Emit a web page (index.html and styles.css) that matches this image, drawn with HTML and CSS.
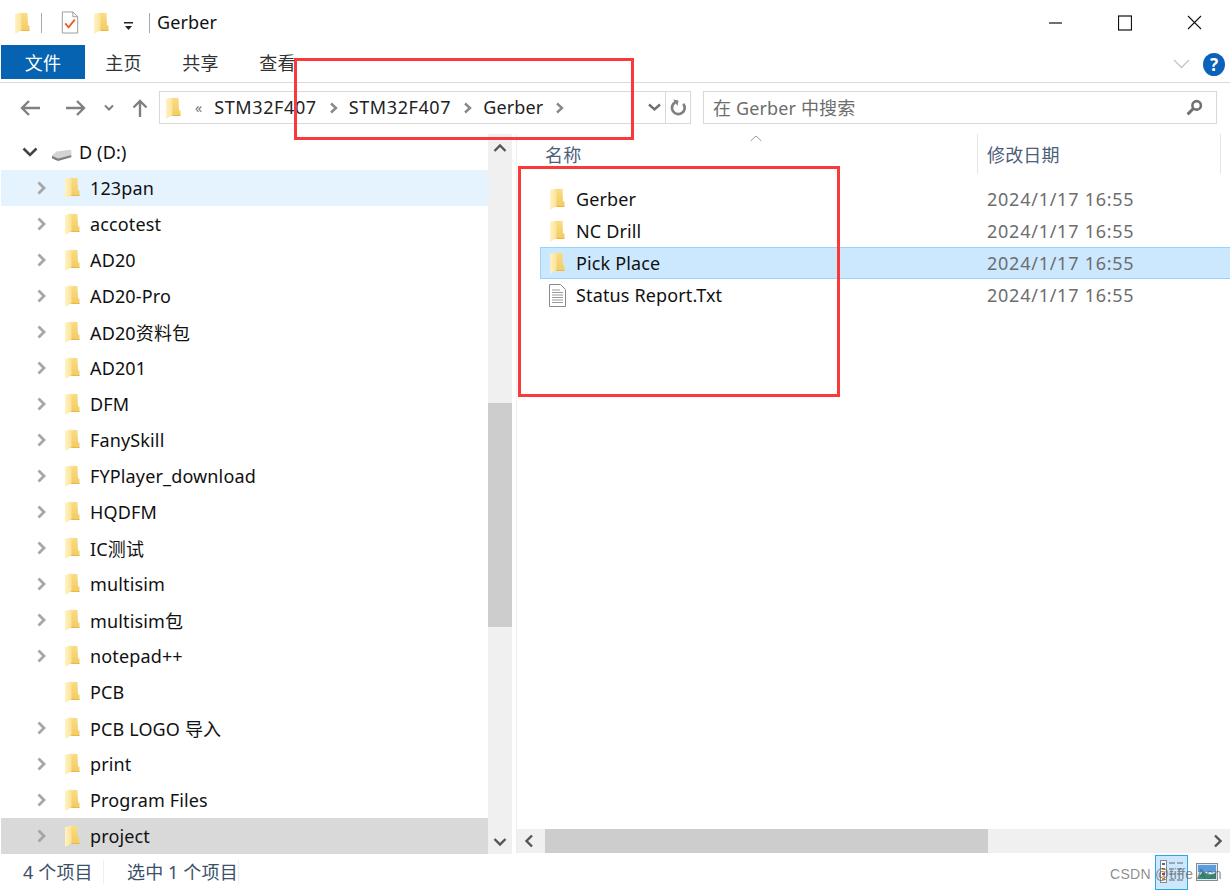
FILE: index.html
```html
<!DOCTYPE html>
<html lang="zh-CN">
<head>
    <meta charset="UTF-8">
    <title>Gerber</title>
    <link rel="stylesheet" href="styles.css">
</head>
<body>
    <svg class="defs" width="0" height="0">
        <linearGradient id="folder-back" x1="0" y1="0" x2="0" y2="1">
            <stop offset="0" stop-color="#f9dc85"/>
            <stop offset="1" stop-color="#f3cb62"/>
        </linearGradient>
        <linearGradient id="folder-front" x1="0" y1="0" x2="1" y2="0">
            <stop offset="0" stop-color="#fff3c4"/>
            <stop offset="1" stop-color="#fbe398"/>
        </linearGradient>
        <symbol id="folder" viewBox="0 0 15 22">
            <path d="M5 1h7.500l.5 12 1.500 1v5H5z" fill="url(#folder-back)"/>
            <path d="M0 2l6.500-1.500V18L1 21.500H0z" fill="url(#folder-front)"/>
            <path d="M6.500 18.200h8V19h-8z" fill="#e2b44c"/>
        </symbol>
        <symbol id="chev" viewBox="0 0 12 14">
            <path d="M2.500 1.500L8 7l-5.500 5.500" fill="none" stroke="#a6a6a6" stroke-width="2.800"/>
        </symbol>
        <symbol id="crumb-chev" viewBox="0 0 9 12">
            <path d="M2 1.500L7 6l-5 4.500" fill="none" stroke="#888" stroke-width="2.400"/>
        </symbol>
    </svg>

    <div class="window">
        <div class="titlebar">
            <div class="qat">
                <svg class="qat-folder" width="15" height="22"><use href="#folder"/></svg>
                <span class="qat-sep"></span>
                <svg class="qat-check" width="18" height="23" viewBox="0 0 18 24">
                    <path d="M1 1h11l5 5v17H1z" fill="#fff" stroke="#999"/>
                    <path d="M12 1v5h5" fill="none" stroke="#999"/>
                    <path d="M4 13l3.500 4L14 9" fill="none" stroke="#e8602c" stroke-width="2"/>
                </svg>
                <svg class="qat-folder2" width="15" height="22"><use href="#folder"/></svg>
                <svg class="qat-drop" width="10" height="10" viewBox="0 0 10 10">
                    <path d="M0 1h9v1.500H0zM1 5h7L4.500 9z" fill="#222"/>
                </svg>
                <span class="qat-sep qat-sep-2"></span>
                <span class="win-title">Gerber</span>
            </div>
            <div class="win-controls">
                <svg width="14" height="14" viewBox="0 0 14 14"><path d="M0 7h13" stroke="#111" stroke-width="1.200"/></svg>
                <svg width="14" height="16" viewBox="0 0 14 16"><rect x=".5" y="1" width="13" height="14" fill="none" stroke="#111" stroke-width="1.200"/></svg>
                <svg width="15" height="15" viewBox="0 0 15 15"><path d="M1 1l13 13M14 1L1 14" stroke="#111" stroke-width="1.100"/></svg>
            </div>
        </div>

        <div class="ribbon">
            <div class="tab tab-file">文件</div>
            <div class="tab">主页</div>
            <div class="tab">共享</div>
            <div class="tab">查看</div>
            <div class="ribbon-right">
                <svg width="17" height="10" viewBox="0 0 17 10"><path d="M1 1l7.500 7.500L16 1" fill="none" stroke="#c4c4c4" stroke-width="1.300"/></svg>
                <div class="help">?</div>
            </div>
        </div>

        <div class="navbar">
            <div class="nav-btns">
                <svg class="nav-back" width="22" height="18" viewBox="0 0 22 18"><path d="M21 9H3M10 2L3 9l7 7" fill="none" stroke="#808080" stroke-width="2.400"/></svg>
                <svg width="22" height="18" viewBox="0 0 22 18"><path d="M2 9h18M13 2l7 7-7 7" fill="none" stroke="#808080" stroke-width="2.400"/></svg>
                <svg width="10" height="8" viewBox="0 0 10 8"><path d="M1 1.500l4 4 4-4" fill="none" stroke="#808080" stroke-width="2"/></svg>
                <svg width="16" height="20" viewBox="0 0 16 20"><path d="M8 19V3M1.500 9.500L8 3l6.500 6.500" fill="none" stroke="#808080" stroke-width="2.400"/></svg>
            </div>
            <div class="address">
                <svg class="addr-folder" width="15" height="22"><use href="#folder"/></svg>
                <span class="addr-more">«</span>
                <span class="crumb crumb-code">STM32F407</span><svg class="crumb-arrow" width="9" height="12"><use href="#crumb-chev"/></svg>
                <span class="crumb crumb-code">STM32F407</span><svg class="crumb-arrow" width="9" height="12"><use href="#crumb-chev"/></svg>
                <span class="crumb">Gerber</span><svg class="crumb-arrow" width="9" height="12"><use href="#crumb-chev"/></svg>
                <div class="addr-end">
                    <div class="addr-drop"><svg width="13" height="9" viewBox="0 0 13 9"><path d="M1 1.500l5.500 5 5.500-5" fill="none" stroke="#707070" stroke-width="2.400"/></svg></div>
                    <div class="addr-refresh"><svg width="17" height="18" viewBox="0 0 16 17"><path d="M12.500 4.500A6 6 0 1 1 5 3" fill="none" stroke="#808080" stroke-width="2.600"/><path d="M3 0l5 1-1 5z" fill="#808080" transform="translate(0 .5)"/></svg></div>
                </div>
            </div>
            <div class="search">
                <span class="search-text">在 Gerber 中搜索</span>
                <svg width="17" height="17" viewBox="0 0 16 16"><circle cx="10" cy="6" r="4" fill="none" stroke="#707070" stroke-width="2.400"/><path d="M7 9l-5.500 5.500" stroke="#707070" stroke-width="2.800"/></svg>
            </div>
        </div>

        <div class="panes">
            <div class="tree">
                <div class="tree-list">
                    <div class="tree-row">
                        <svg class="tree-open" width="16" height="10" viewBox="0 0 16 10"><path d="M1.500 1.500L8 8l6.500-6.500" fill="none" stroke="#444" stroke-width="2.600"/></svg>
                        <svg class="drive" width="23" height="12" viewBox="0 0 24 14"><path d="M1 8l5-5 16-2q1.500 0 1.500 2v4L8 11z" fill="#d4d4d4"/><path d="M1 8l7 3 15.500-4v2.500L8 14l-7-3z" fill="#7f7f7f"/><path d="M4 11l3 1" stroke="#3f9f4f"/></svg>
                        <span>D (D:)</span>
                    </div>
                    <div class="tree-row hot"><svg class="arrow" width="12" height="14"><use href="#chev"/></svg><svg class="folder" width="15" height="22"><use href="#folder"/></svg><span>123pan</span></div>
                    <div class="tree-row"><svg class="arrow" width="12" height="14"><use href="#chev"/></svg><svg class="folder" width="15" height="22"><use href="#folder"/></svg><span>accotest</span></div>
                    <div class="tree-row"><svg class="arrow" width="12" height="14"><use href="#chev"/></svg><svg class="folder" width="15" height="22"><use href="#folder"/></svg><span>AD20</span></div>
                    <div class="tree-row"><svg class="arrow" width="12" height="14"><use href="#chev"/></svg><svg class="folder" width="15" height="22"><use href="#folder"/></svg><span>AD20-Pro</span></div>
                    <div class="tree-row"><svg class="arrow" width="12" height="14"><use href="#chev"/></svg><svg class="folder" width="15" height="22"><use href="#folder"/></svg><span>AD20资料包</span></div>
                    <div class="tree-row"><svg class="arrow" width="12" height="14"><use href="#chev"/></svg><svg class="folder" width="15" height="22"><use href="#folder"/></svg><span>AD201</span></div>
                    <div class="tree-row"><svg class="arrow" width="12" height="14"><use href="#chev"/></svg><svg class="folder" width="15" height="22"><use href="#folder"/></svg><span>DFM</span></div>
                    <div class="tree-row"><svg class="arrow" width="12" height="14"><use href="#chev"/></svg><svg class="folder" width="15" height="22"><use href="#folder"/></svg><span>FanySkill</span></div>
                    <div class="tree-row"><svg class="arrow" width="12" height="14"><use href="#chev"/></svg><svg class="folder" width="15" height="22"><use href="#folder"/></svg><span>FYPlayer_download</span></div>
                    <div class="tree-row"><svg class="arrow" width="12" height="14"><use href="#chev"/></svg><svg class="folder" width="15" height="22"><use href="#folder"/></svg><span>HQDFM</span></div>
                    <div class="tree-row"><svg class="arrow" width="12" height="14"><use href="#chev"/></svg><svg class="folder" width="15" height="22"><use href="#folder"/></svg><span>IC测试</span></div>
                    <div class="tree-row"><svg class="arrow" width="12" height="14"><use href="#chev"/></svg><svg class="folder" width="15" height="22"><use href="#folder"/></svg><span>multisim</span></div>
                    <div class="tree-row"><svg class="arrow" width="12" height="14"><use href="#chev"/></svg><svg class="folder" width="15" height="22"><use href="#folder"/></svg><span>multisim包</span></div>
                    <div class="tree-row"><svg class="arrow" width="12" height="14"><use href="#chev"/></svg><svg class="folder" width="15" height="22"><use href="#folder"/></svg><span>notepad++</span></div>
                    <div class="tree-row"><span class="arrow-none"></span><svg class="folder" width="15" height="22"><use href="#folder"/></svg><span>PCB</span></div>
                    <div class="tree-row"><svg class="arrow" width="12" height="14"><use href="#chev"/></svg><svg class="folder" width="15" height="22"><use href="#folder"/></svg><span>PCB LOGO 导入</span></div>
                    <div class="tree-row"><svg class="arrow" width="12" height="14"><use href="#chev"/></svg><svg class="folder" width="15" height="22"><use href="#folder"/></svg><span>print</span></div>
                    <div class="tree-row"><svg class="arrow" width="12" height="14"><use href="#chev"/></svg><svg class="folder" width="15" height="22"><use href="#folder"/></svg><span>Program Files</span></div>
                    <div class="tree-row active"><svg class="arrow" width="12" height="14"><use href="#chev"/></svg><svg class="folder" width="15" height="22"><use href="#folder"/></svg><span>project</span></div>
                </div>
                <div class="vscroll">
                    <svg width="14" height="10" viewBox="0 0 14 10"><path d="M1.500 8L7 2.500 12.500 8" fill="none" stroke="#555" stroke-width="2.400"/></svg>
                    <div class="vtrack"><div class="vthumb"></div></div>
                    <svg width="14" height="10" viewBox="0 0 14 10"><path d="M1.500 2L7 7.500 12.500 2" fill="none" stroke="#555" stroke-width="2.400"/></svg>
                </div>
            </div>

            <div class="files">
                <div class="file-head">
                    <svg class="sort-up" width="12" height="7" viewBox="0 0 12 7"><path d="M.5 6L6 1l5.500 5" fill="none" stroke="#999"/></svg>
                    <div class="col-name">名称</div>
                    <div class="col-date">修改日期</div>
                </div>
                <div class="file-list">
                    <div class="file-row"><div class="file-name"><svg width="15" height="22"><use href="#folder"/></svg><span>Gerber</span></div><div class="file-date">2024/1/17 16:55</div></div>
                    <div class="file-row"><div class="file-name"><svg width="15" height="22"><use href="#folder"/></svg><span>NC Drill</span></div><div class="file-date">2024/1/17 16:55</div></div>
                    <div class="file-row selected"><div class="file-name"><svg width="15" height="22"><use href="#folder"/></svg><span>Pick Place</span></div><div class="file-date">2024/1/17 16:55</div></div>
                    <div class="file-row"><div class="file-name"><svg class="doc-icon" width="17" height="23" viewBox="0 0 17 23"><path d="M.5.500h11l5 5v17H.5z" fill="#fff" stroke="#8a8a8a"/><path d="M3 6h8M3 8.500h11M3 11h11M3 13.500h11M3 16h11M3 18.500h11" stroke="#9a9a9a"/></svg><span>Status Report.Txt</span></div><div class="file-date">2024/1/17 16:55</div></div>
                </div>
                <div class="hscroll">
                    <svg width="10" height="14" viewBox="0 0 10 14"><path d="M8 1.500L2.500 7 8 12.500" fill="none" stroke="#555" stroke-width="2.400"/></svg>
                    <div class="htrack"><div class="hthumb"></div></div>
                    <svg width="10" height="14" viewBox="0 0 10 14"><path d="M2 1.500L7.500 7 2 12.500" fill="none" stroke="#555" stroke-width="2.400"/></svg>
                </div>
            </div>
        </div>

        <div class="statusbar">
            <span class="stat stat-count">4 个项目</span>
            <span class="stat stat-sel">选中 1 个项目</span>
            <div class="views">
                <div class="view-btn on">
                    <svg width="24" height="26" viewBox="0 0 24 26">
                        <rect x=".5" y="1.500" width="6" height="22" fill="#fff" stroke="#888"/>
                        <path d="M2 4h3v2H2z" fill="#3a6ea5"/><path d="M2 9h3v2H2z" fill="#c98a2b"/><path d="M2 14h3v2H2z" fill="#c0392b"/><path d="M2 19h3v2H2z" fill="#c98a2b"/>
                        <path d="M9 4h6M17 4h6M9 10h5M17 10h5M9 15h6M17 15h6M9 21h6M17 21h6" stroke="#666"/>
                    </svg>
                </div>
                <div class="view-btn">
                    <svg width="22" height="18" viewBox="0 0 22 18">
                        <rect x=".5" y=".5" width="21" height="17" fill="#dcebf8" stroke="#8a8a8a"/>
                        <path d="M2 2h18v7H2z" fill="#5b9be0"/>
                        <path d="M2 15l5-7 6 4 7-2v6H2z" fill="#2f8f7a"/>
                    </svg>
                </div>
            </div>
        </div>

        <div class="mark mark-addr"></div>
        <div class="mark mark-files"></div>
        <div class="watermark">CSDN @tiffe Asn</div>
    </div>
</body>
</html>
```

FILE: styles.css
```css
* {
    box-sizing: border-box;
}
body {
    margin: 0;
    padding: 0;
    background-color: white;
    font-family: "Noto Sans", "Noto Sans CJK SC", sans-serif;
    font-size: 18px;
    letter-spacing: 0.14px;
    color: #111;
    overflow: hidden;
}
.defs {
    position: absolute;
}
.window {
    position: relative;
    width: 1230px;
    height: 890px;
    display: flex;
    flex-direction: column;
    overflow: hidden;
}

/* title bar */
.titlebar {
    height: 45px;
    display: flex;
    justify-content: space-between;
    align-items: center;
    flex-shrink: 0;
}
.qat {
    display: flex;
    align-items: center;
    padding-left: 15px;
}
.qat-sep {
    width: 1px;
    height: 20px;
    background-color: #aaa;
    margin-left: 11px;
}
.qat-check {
    margin-left: 19px;
}
.qat-folder2 {
    margin-left: 15px;
}
.qat-drop {
    margin-left: 15px;
    margin-top: 6px;
}
.qat-sep-2 {
    margin-left: 15px;
}
.win-title {
    margin-left: 7px;
    line-height: 22px;
    margin-bottom: 2px;
}
.win-controls {
    display: flex;
    align-items: center;
    gap: 55px;
    padding-right: 28px;
}

/* ribbon tabs */
.ribbon {
    height: 38px;
    display: flex;
    align-items: flex-start;
    padding-left: 1px;
    border-bottom: 1px solid #dadada;
    flex-shrink: 0;
}
.tab {
    width: 77px;
    height: 34px;
    line-height: 36px;
    text-align: center;
    color: #333;
}
.tab-file {
    width: 84px;
    background-color: #0563b1;
    color: white;
}
.ribbon-right {
    margin-left: auto;
    display: flex;
    align-items: center;
    gap: 13px;
    padding-right: 5px;
    height: 38px;
}
.help {
    width: 22px;
    height: 23px;
    border-radius: 50%;
    background-color: #0c62ba;
    color: white;
    font-weight: bold;
    font-size: 17px;
    line-height: 23px;
    text-align: center;
}

/* address bar */
.navbar {
    height: 51px;
    display: flex;
    align-items: flex-start;
    padding-top: 8px;
    flex-shrink: 0;
}
.nav-btns {
    width: 159px;
    height: 34px;
    display: flex;
    align-items: center;
    padding-left: 19px;
    gap: 18px;
}
.nav-back {
    margin-right: 5px;
}
.address {
    width: 532px;
    height: 33px;
    border: 1px solid #d9d9d9;
    display: flex;
    align-items: center;
    padding-left: 6px;
}
.addr-more {
    color: #777;
    font-size: 14px;
    margin-left: 14px;
    margin-right: 12px;
}
.crumb {
    color: #222;
    margin-bottom: 2px;
}
.crumb-code {
    letter-spacing: 0.6px;
}
.crumb-arrow {
    margin: 0 11px 0 12px;
}
.addr-end {
    margin-left: auto;
    display: flex;
    align-items: center;
    height: 100%;
}
.addr-drop {
    width: 22px;
    display: flex;
    justify-content: center;
}
.addr-refresh {
    width: 25px;
    height: 100%;
    border-left: 1px solid #d9d9d9;
    display: flex;
    align-items: center;
    justify-content: center;
}
.search {
    width: 514px;
    height: 33px;
    margin-left: 12px;
    border: 1px solid #d9d9d9;
    display: flex;
    align-items: center;
    justify-content: space-between;
    padding: 0 13px 0 9px;
}
.search-text {
    color: #6d6d6d;
    margin-bottom: 2px;
}

/* panes */
.panes {
    flex-grow: 1;
    display: flex;
    min-height: 0;
}
.tree {
    width: 517px;
    display: flex;
    border-right: 1px solid #eee;
    padding-right: 4px;
    flex-shrink: 0;
}
.tree-list {
    width: 487px;
    margin-left: 1px;
    flex-shrink: 0;
}
.tree-row {
    height: 36px;
    display: flex;
    align-items: center;
    white-space: nowrap;
}
.tree-open {
    margin-left: 21px;
}
.drive {
    margin-left: 12px;
    margin-right: 6px;
    margin-top: 5px;
}
.arrow {
    margin-left: 35px;
}
.arrow-none {
    width: 12px;
    margin-left: 35px;
}
.folder {
    margin-left: 17px;
    margin-right: 10px;
}
.hot {
    background-color: #e5f3ff;
}
.active {
    background-color: #d9d9d9;
}
.vscroll {
    width: 24px;
    background-color: #f0f0f0;
    display: flex;
    flex-direction: column;
    align-items: center;
    justify-content: space-between;
    padding: 9px 0 7px;
}
.vtrack {
    flex-grow: 1;
    width: 100%;
    padding-top: 250px;
}
.vthumb {
    width: 100%;
    height: 224px;
    background-color: #cdcdcd;
}

/* file list */
.files {
    flex-grow: 1;
    min-width: 0;
    display: flex;
    flex-direction: column;
}
.file-head {
    position: relative;
    height: 41px;
    display: flex;
    align-items: flex-start;
    padding-left: 28px;
    color: #4c607a;
    flex-shrink: 0;
}
.sort-up {
    position: absolute;
    left: 233px;
    top: 1px;
}
.col-name {
    width: 432px;
    padding-top: 7px;
}
.col-date {
    width: 244px;
    height: 40px;
    border-left: 1px solid #e5e5e5;
    border-right: 1px solid #e5e5e5;
    padding: 7px 0 0 9px;
}
.file-list {
    flex-grow: 1;
    padding: 8px 0 0 23px;
}
.file-row {
    height: 32px;
    display: flex;
    align-items: center;
    white-space: nowrap;
    border: 1px solid transparent;
}
.file-row.selected {
    background-color: #cce8ff;
    border-color: #99d1ff;
    border-right: none;
}
.file-name {
    width: 446px;
    display: flex;
    align-items: center;
    gap: 11px;
    padding-left: 9px;
}
.doc-icon {
    margin: 0 -1px;
}
.file-date {
    color: #6d6d6d;
    letter-spacing: 0.75px;
}
.hscroll {
    height: 24px;
    margin-bottom: 1px;
    background-color: #f0f0f0;
    display: flex;
    align-items: center;
    justify-content: space-between;
    padding: 0 7px;
    flex-shrink: 0;
}
.htrack {
    flex-grow: 1;
    height: 100%;
    padding-left: 11px;
}
.hthumb {
    width: 443px;
    height: 100%;
    background-color: #cdcdcd;
}

/* status bar */
.statusbar {
    height: 36px;
    display: flex;
    align-items: center;
    padding-left: 23px;
    color: #3b4f68;
    flex-shrink: 0;
}
.stat {
    height: 24px;
    line-height: 24px;
    border-right: 1px solid #eee;
}
.stat-count {
    width: 81px;
    margin-right: 23px;
}
.stat-sel {
    width: 112px;
}
.views {
    margin-left: auto;
    display: flex;
    align-items: center;
    height: 100%;
    padding-right: 5px;
}
.view-btn {
    width: 37px;
    height: 35px;
    display: flex;
    align-items: center;
    justify-content: center;
}
.view-btn.on {
    width: 33px;
    background-color: #cce8ff;
    border: 1px solid #2ea7e0;
}

/* annotations drawn over the screenshot */
.mark {
    position: absolute;
    border: 3px solid #f93a3a;
}
.mark-addr {
    left: 294px;
    top: 58px;
    width: 340px;
    height: 82px;
}
.mark-files {
    left: 518px;
    top: 166px;
    width: 322px;
    height: 231px;
}
.watermark {
    position: absolute;
    left: 1110px;
    top: 866px;
    font-family: "Liberation Sans", sans-serif;
    font-size: 14px;
    letter-spacing: 0.3px;
    color: rgba(90, 90, 90, 0.7);
    white-space: nowrap;
}
```
